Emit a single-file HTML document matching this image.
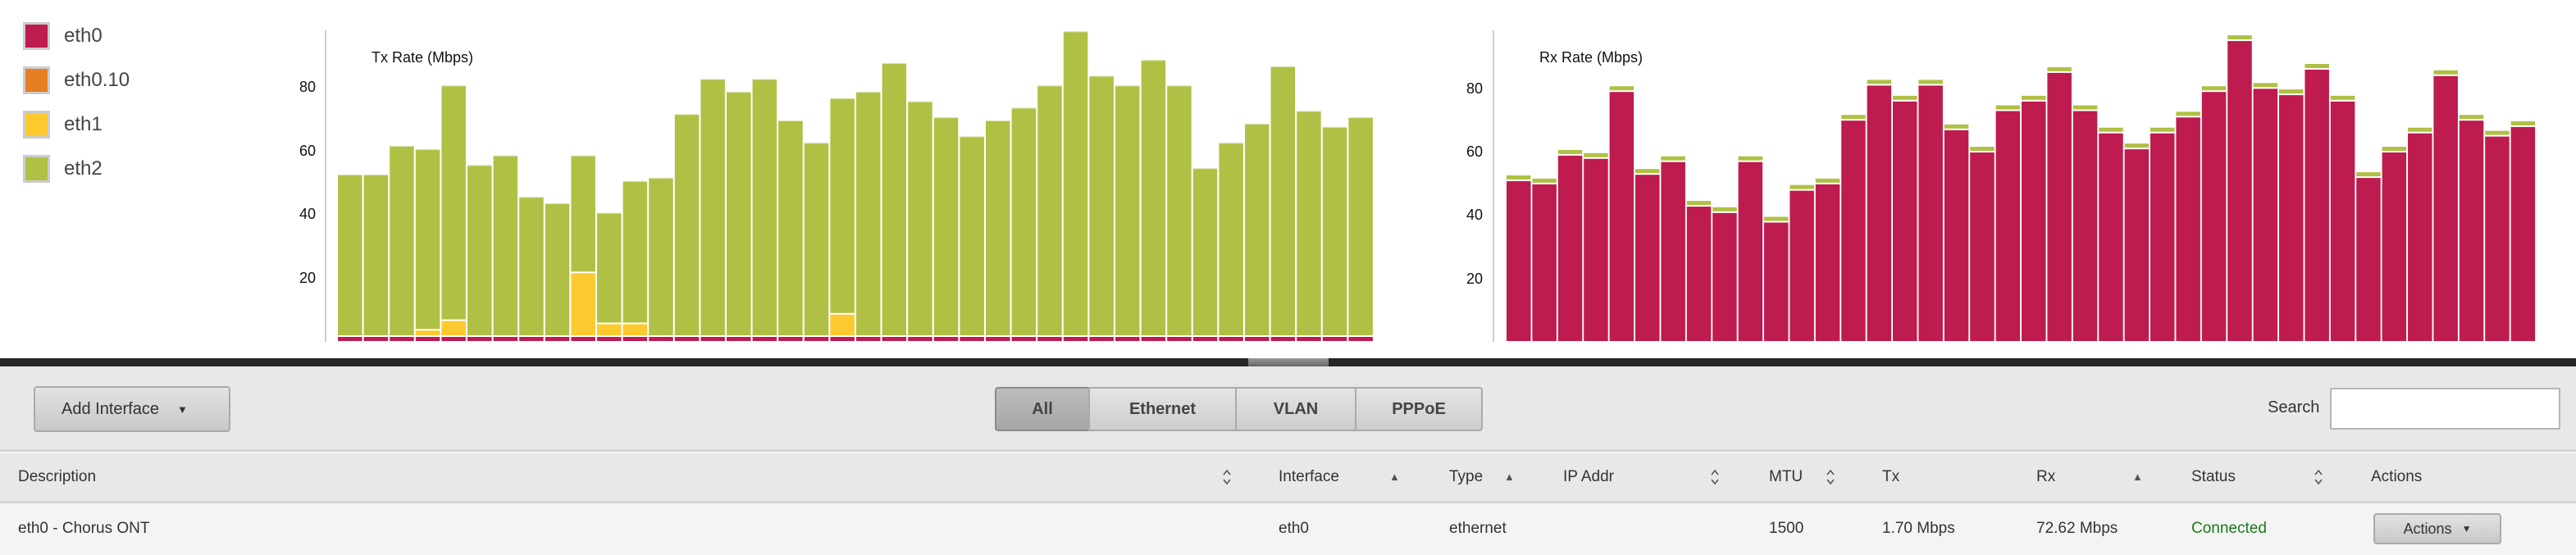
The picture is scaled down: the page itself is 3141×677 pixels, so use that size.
<!DOCTYPE html>
<html><head><meta charset="utf-8"><style>
*{margin:0;padding:0;box-sizing:border-box}
body{width:3141px;height:677px;overflow:hidden;background:#fff;font-family:"Liberation Sans",sans-serif;color:#444;position:relative}
.a{position:absolute;white-space:nowrap}
.sw{position:absolute;left:28px;width:33px;height:34px;border:3px solid #ccc}
.lg{position:absolute;left:78px;font-size:24px;color:#444}
.btn{position:absolute;background:linear-gradient(#e2e2e2,#c8c8c8);border:2px solid #aaa;border-radius:4px;font-size:20px;color:#333;display:flex;align-items:center;justify-content:center}
.seg{position:absolute;top:472px;height:54px;background:linear-gradient(#e4e4e4,#cdcdcd);border:2px solid #aaa;font-size:20px;font-weight:bold;color:#444;display:flex;align-items:center;justify-content:center}
.h{position:absolute;top:571px;font-size:19px;color:#333}
.d{position:absolute;top:634px;font-size:19px;color:#333}
.ar{position:absolute;font-size:13px;color:#555}
.ud{position:absolute;top:571px}
</style></head><body>
<div class="sw" style="top:27px;background:#be1b4f"></div><div class="lg" style="top:30px">eth0</div>
<div class="sw" style="top:81px;background:#e67e22"></div><div class="lg" style="top:84px">eth0.10</div>
<div class="sw" style="top:135px;background:#fcc92e"></div><div class="lg" style="top:138px">eth1</div>
<div class="sw" style="top:189px;background:#b0c044"></div><div class="lg" style="top:192px">eth2</div>

<svg class="a" style="left:0;top:0" width="3141" height="437" id="ch">
<g font-family="Liberation Sans,sans-serif" font-size="18" fill="#111">
<line x1="397" y1="37" x2="397" y2="417" stroke="#ccc" stroke-width="2"/>
<text x="453" y="76">Tx Rate (Mbps)</text>
<text x="385" y="112" text-anchor="end">80</text><text x="385" y="190" text-anchor="end">60</text>
<text x="385" y="267" text-anchor="end">40</text><text x="385" y="345" text-anchor="end">20</text>
<line x1="1821" y1="37" x2="1821" y2="417" stroke="#ccc" stroke-width="2"/>
<text x="1877" y="76">Rx Rate (Mbps)</text>
<text x="1808" y="114" text-anchor="end">80</text><text x="1808" y="191" text-anchor="end">60</text>
<text x="1808" y="268" text-anchor="end">40</text><text x="1808" y="346" text-anchor="end">20</text>
</g></svg>
<script>
(function(){
var tx=[52,52,61,60,80,55,58,45,43,58,40,50,51,71,82,78,82,69,62,76,78,87,75,70,64,69,73,80,97,83,80,88,80,54,62,68,86,72,67,70];
var rx=[52,51,60,59,80,54,58,44,42,58,39,49,51,71,82,77,82,68,61,74,77,86,74,67,62,67,72,80,96,81,79,87,77,53,61,67,85,71,66,69];
var y1={3:2,4:5,9:20,10:4,11:4,19:7};
var s='',k=3.885,B=416;
function r(x,y,w,h,c){return '<rect x="'+x+'" y="'+y+'" width="'+w+'" height="'+h+'" fill="'+c+'"/>';}
for(var i=0;i<40;i++){
 var x=412+i*31.6,tp=B-tx[i]*k,rh=5;
 s+=r(x,B-rh,29.5,rh,'#be1b4f');
 var yb=B-rh-2;
 if(y1[i]){var yh=y1[i]*k-2;s+=r(x,yb-yh,29.5,yh,'#fcc92e');yb=yb-yh-2;}
 s+=r(x,tp,29.5,yb-tp,'#b0c044');
 s+=r(x,tp-1,29.5,1,'#d8e0a8');
 var x2=1837+i*31.4,t2=B-rx[i]*k;
 s+=r(x2,t2,29.5,5,'#b0c044');
 s+=r(x2,t2+7,29.5,B-t2-7,'#be1b4f');
}
document.getElementById('ch').insertAdjacentHTML('beforeend',s);
})();
</script>

<div class="a" style="left:0;top:437px;width:3141px;height:10px;background:#262626"></div>
<div class="a" style="left:1522px;top:437px;width:98px;height:10px;background:linear-gradient(#999,#666)"></div>
<div class="a" style="left:0;top:447px;width:3141px;height:230px;background:#e8e8e8"></div>
<div class="a" style="left:0;top:548px;width:3141px;height:3px;background:#d4d4d4"></div>
<div class="a" style="left:0;top:551px;width:3141px;height:2px;background:#f6f6f6"></div>

<div class="btn" style="left:41px;top:471px;width:240px;height:56px;justify-content:flex-start;padding-left:32px">Add Interface<span style="font-size:13px;margin-left:22px">▼</span></div>
<div class="seg" style="left:1213px;width:116px;background:linear-gradient(#bdbdbd,#a6a6a6);border-radius:4px 0 0 4px;border-color:#8a8a8a">All</div>
<div class="seg" style="left:1327px;width:181px">Ethernet</div>
<div class="seg" style="left:1506px;width:148px">VLAN</div>
<div class="seg" style="left:1652px;width:156px;border-radius:0 4px 4px 0">PPPoE</div>
<div class="a" style="left:2765px;top:486px;font-size:20px;color:#333">Search</div>
<div class="a" style="left:2841px;top:473px;width:281px;height:51px;background:#fff;border:2px solid #b5b5b5;border-radius:2px"></div>

<div class="a" style="left:0;top:611px;width:3141px;height:3px;background:#d4d4d4"></div>
<div class="a" style="left:0;top:614px;width:3141px;height:63px;background:#f4f4f4"></div>

<div class="h" style="left:22px">Description</div>
<svg class="ud" style="left:1490px" width="12" height="22"><path d="M2 8L6 3L10 8M2 14L6 19L10 14" fill="none" stroke="#555" stroke-width="1.6"/></svg>
<div class="h" style="left:1559px">Interface</div><div class="ar" style="left:1694px;top:574px">▲</div>
<div class="h" style="left:1767px">Type</div><div class="ar" style="left:1834px;top:574px">▲</div>
<div class="h" style="left:1906px">IP Addr</div>
<svg class="ud" style="left:2085px" width="12" height="22"><path d="M2 8L6 3L10 8M2 14L6 19L10 14" fill="none" stroke="#555" stroke-width="1.6"/></svg>
<div class="h" style="left:2157px">MTU</div>
<svg class="ud" style="left:2226px" width="12" height="22"><path d="M2 8L6 3L10 8M2 14L6 19L10 14" fill="none" stroke="#555" stroke-width="1.6"/></svg>
<div class="h" style="left:2295px">Tx</div>
<div class="h" style="left:2483px">Rx</div><div class="ar" style="left:2600px;top:574px">▲</div>
<div class="h" style="left:2672px">Status</div>
<svg class="ud" style="left:2821px" width="12" height="22"><path d="M2 8L6 3L10 8M2 14L6 19L10 14" fill="none" stroke="#555" stroke-width="1.6"/></svg>
<div class="h" style="left:2891px">Actions</div>

<div class="d" style="left:22px">eth0 - Chorus ONT</div>
<div class="d" style="left:1559px">eth0</div>
<div class="d" style="left:1767px">ethernet</div>
<div class="d" style="left:2157px">1500</div>
<div class="d" style="left:2295px">1.70 Mbps</div>
<div class="d" style="left:2483px">72.62 Mbps</div>
<div class="d" style="left:2672px;color:#1a7a1a">Connected</div>
<div class="btn" style="left:2894px;top:626px;width:156px;height:38px;font-size:18px">Actions<span style="font-size:12px;margin-left:12px">▼</span></div>
</body></html>
